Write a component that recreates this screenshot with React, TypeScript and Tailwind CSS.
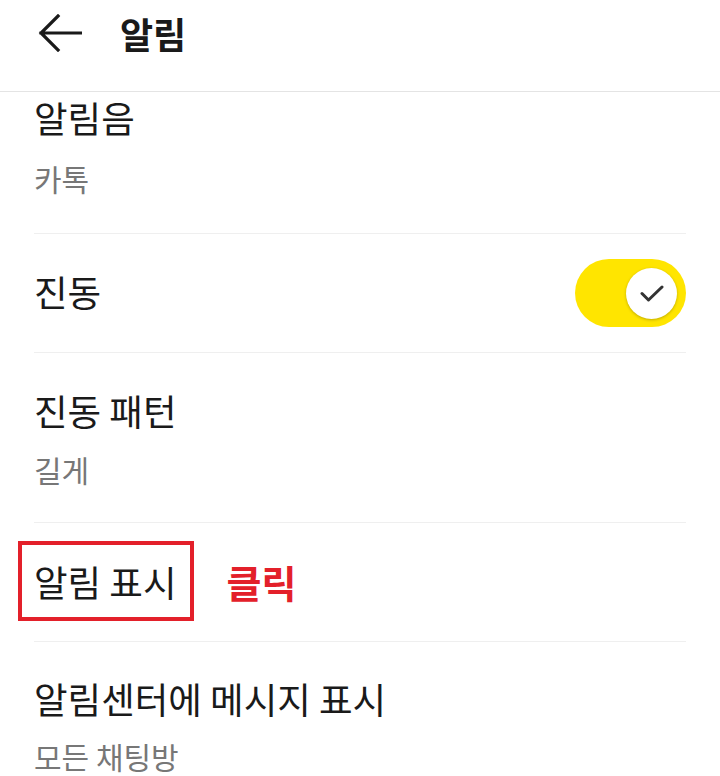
import { useState } from 'react';

const font = { fontFamily: '"Noto Sans CJK KR", "Noto Sans", sans-serif' };

function Toggle({ on }: { on: boolean }) {
  return (
    <div className="flex h-[68px] w-[111px] items-center justify-end rounded-full bg-[#ffe500] pr-[9px]">
      <div className="flex h-[51px] w-[51px] items-center justify-center rounded-full bg-white shadow-[0_1px_3px_rgba(0,0,0,0.25)]">
        {on && (
          <svg width="24" height="17" viewBox="0 0 24 17" fill="none">
            <path d="M2 8.5 L8.5 15 L22 2" stroke="#333" strokeWidth="3" strokeLinecap="round" strokeLinejoin="round" />
          </svg>
        )}
      </div>
    </div>
  );
}

export default function App() {
  const [vibrate] = useState(true);

  return (
    <div className="h-[776px] w-[720px] overflow-hidden bg-white text-[#1a1a1a]" style={font}>
      {/* Header */}
      <div className="h-[92px] border-b border-[#e4e4e4]">
        <div className="flex h-[66px] items-center pl-[38px]">
          <svg width="44" height="38" viewBox="0 0 44 38" fill="none">
            <path d="M3 19 H43 M20 2 L3 19 L20 36" stroke="#1a1a1a" strokeWidth="3.2" strokeLinecap="square" />
          </svg>
          <h1 className="ml-[38px] text-[36px] font-bold leading-none">알림</h1>
        </div>
      </div>

      <div className="px-[34px]">
        {/* 알림음 */}
        <div className="pt-[1px] pb-[35px]">
          <div className="text-[36.5px] leading-[50px]">알림음</div>
          <div className="mt-[15px] text-[30px] leading-[40px] text-[#777]">카톡</div>
        </div>

        {/* 진동 */}
        <div className="flex h-[119px] items-center justify-between border-t border-[#efefef]">
          <div className="-mt-[2px] text-[36.5px] leading-[50px]">진동</div>
          <Toggle on={vibrate} />
        </div>

        {/* 진동 패턴 */}
        <div className="border-t border-[#efefef] pt-[33px] pb-[33px]">
          <div className="text-[36.5px] leading-[50px]">진동 패턴</div>
          <div className="mt-[13px] text-[30px] leading-[40px] text-[#777]">길게</div>
        </div>

        {/* 알림 표시 */}
        <div className="flex h-[119px] items-center border-t border-[#efefef]">
          <span className="relative text-[36.5px] leading-[50px]">
            알림 표시
            <span className="absolute -left-[16px] -top-[16px] h-[80px] w-[176px] border-[4px] border-[#e3202a]" />
          </span>
          <span className="ml-[50px] text-[38px] font-bold leading-[50px] text-[#e3202a]">클릭</span>
        </div>

        {/* 알림센터에 메시지 표시 */}
        <div className="border-t border-[#efefef] pt-[32px]">
          <div className="text-[36.5px] leading-[50px]">알림센터에 메시지 표시</div>
          <div className="mt-[12px] text-[30px] leading-[40px] text-[#777]">모든 채팅방</div>
        </div>
      </div>
    </div>
  );
}
